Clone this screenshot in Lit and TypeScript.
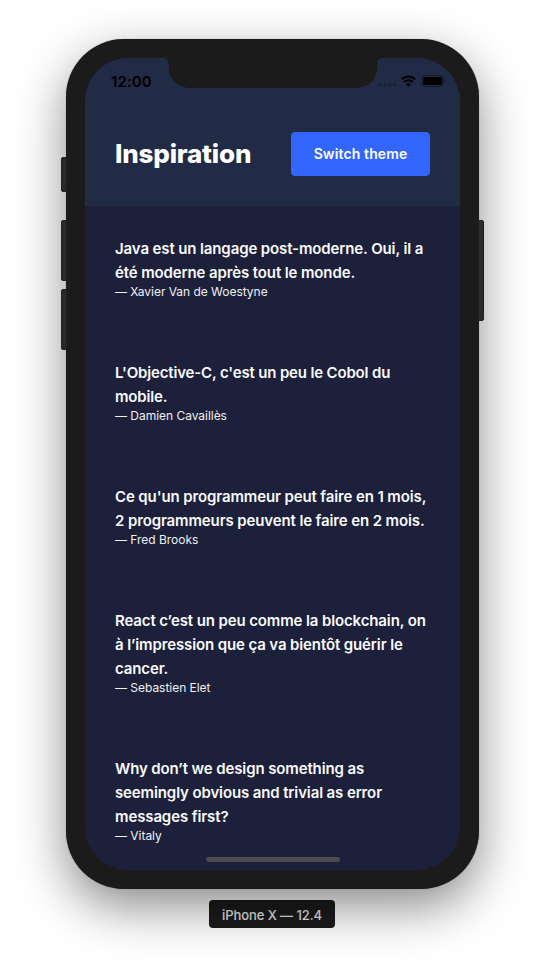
import { LitElement, html, css } from "lit";
import { customElement } from "lit/decorators.js";

interface Quote {
  lines: string[];
  author: string;
}

const QUOTES: Quote[] = [
  { lines: ["Java est un langage post-moderne. Oui, il a", "été moderne après tout le monde."], author: "Xavier Van de Woestyne" },
  { lines: ["L'Objective-C, c'est un peu le Cobol du", "mobile."], author: "Damien Cavaillès" },
  { lines: ["Ce qu'un programmeur peut faire en 1 mois,", "2 programmeurs peuvent le faire en 2 mois."], author: "Fred Brooks" },
  { lines: ["React c’est un peu comme la blockchain, on", "à l’impression que ça va bientôt guérir le", "cancer."], author: "Sebastien Elet" },
  { lines: ["Why don’t we design something as", "seemingly obvious and trivial as error", "messages first?"], author: "Vitaly" },
];

@customElement("app-root")
export class AppRoot extends LitElement {
  static styles = css`
    :host { display: flex; flex-direction: column; align-items: center; box-sizing: border-box; width: 545px; height: 964px; padding-top: 39px; overflow: hidden; background: #fff; font-family: Inter, "Liberation Sans", sans-serif; }
    .device { position: relative; box-sizing: border-box; width: 413px; height: 850px; padding: 19px; border-radius: 58px; background: #1b1b1b; box-shadow: 0 0 1px rgba(0,0,0,.45), 0 18px 50px rgba(0,0,0,.46); }
    .key { position: absolute; width: 6px; background: #2a2a2a; box-shadow: inset 0 0 0 1px #202020; left: -5px; border-radius: 3px 0 0 3px; }
    .mute { top: 118px; height: 35px; }
    .up { top: 181px; height: 61px; }
    .down { top: 250px; height: 61px; }
    .power { left: auto; right: -5px; top: 181px; height: 101px; border-radius: 0 3px 3px 0; }
    .screen { position: relative; width: 375px; height: 812px; border-radius: 43px; overflow: hidden; background: #1c203a; color: #fff; }
    .notch { position: absolute; left: 79px; top: 0; }
    .top { height: 148px; background: #222b45; display: flex; flex-direction: column; }
    .status { height: 44px; box-sizing: border-box; padding: 14px 13px 0 26px; display: flex; justify-content: space-between; color: #000; }
    .time { font-size: 15px; line-height: 19px; font-weight: 600; letter-spacing: .1px; }
    .icons { display: block; }
    .head { flex: 1; display: flex; align-items: center; justify-content: space-between; padding: 0 30px; }
    h1 { margin: 0; font-size: 26px; line-height: 36px; font-weight: 800; letter-spacing: -.2px; white-space: nowrap; }
    button { width: 139px; height: 44px; padding: 0; border: 1px solid #3366ff; border-radius: 4px; background: #3366ff; color: #fff; font: 600 14px/20px Inter, sans-serif; letter-spacing: .12px; white-space: nowrap; }
    .list { padding: 31px 30px 0; display: flex; flex-direction: column; gap: 62px; }
    .quote { font-size: 15px; line-height: 24px; font-weight: 600; letter-spacing: -.12px; margin: 0; white-space: nowrap; color: #fafafa; }
    .item:nth-child(2) .quote { letter-spacing: -.16px; }
    .line { display: block; width: max-content; }
    .author { display: block; width: max-content; font-size: 12px; line-height: 14px; letter-spacing: -.03px; color: #f0f0f2; }
    .home { position: absolute; left: 120.5px; bottom: 8px; width: 134px; height: 5px; border-radius: 3px; background: #4a4a4b; }
    .label { margin: 11px 1px 0 0; width: 126px; height: 28px; border-radius: 4px; background: #1b1b1b; color: #e4e4e4; font-size: 13px; font-weight: 500; letter-spacing: -.08px; line-height: 31px; text-align: center; white-space: nowrap; }
  `;

  render() {
    return html`
      <div class="device">
        <div class="key mute"></div><div class="key up"></div><div class="key down"></div><div class="key power"></div>
        <div class="screen">
          <div class="top">
            <div class="status">
              <span class="time">12:00</span>
              <svg class="icons" width="69" height="18" viewBox="0 0 69 18">
                <g fill="#000" fill-opacity=".3"><circle cx="2.500" cy="12.700" r="1.500"/><circle cx="7.200" cy="12.700" r="1.500"/><circle cx="11.900" cy="12.700" r="1.500"/><circle cx="16.600" cy="12.700" r="1.500"/></g>
                <g fill="none" stroke="#000" stroke-width="2.200"><path d="M23.800 7.300A9.700 9.700 0 0 1 37.200 7.300"/><path d="M26.200 10A6.200 6.200 0 0 1 34.800 10"/></g>
                <path d="M30.500 14.800L28.100 12.300A3.400 3.400 0 0 1 32.900 12.300Z"/>
                <rect x="43.600" y="3.500" width="22" height="11" rx="3" fill="none" stroke="#000" stroke-opacity=".4"/>
                <rect x="45.100" y="5" width="19" height="8" rx="1.500"/>
                <path d="M66.900 7.100C68.500 7.700 68.500 10.300 66.900 10.900Z" fill-opacity=".4"/>
              </svg>
            </div>
            <div class="head"><h1>Inspiration</h1><button>Switch theme</button></div>
          </div>
          <div class="list">
            ${QUOTES.map((q) => html`<div class="item"><p class="quote">${q.lines.map((l) => html`<span class="line">${l}</span>`)}</p><span class="author">— ${q.author}</span></div>`)}
          </div>
          <svg class="notch" width="217" height="30" viewBox="0 0 217 30"><path d="M0 0H217C214.500 0 213.500 2 213.500 5V7C213.500 21 205 30 191 30H27C13 30 4.500 21 4.500 7V5C4.500 2 3 0 0 0Z" fill="#1b1b1b"/></svg>
          <div class="home"></div>
        </div>
      </div>
      <div class="label">iPhone X — 12.4</div>
    `;
  }
}
